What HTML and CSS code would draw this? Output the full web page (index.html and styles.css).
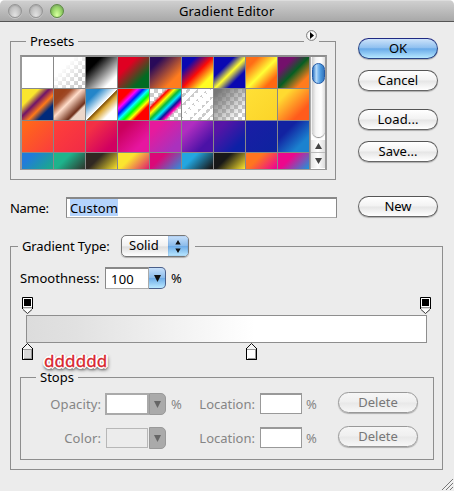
FILE: index.html
```html
<!DOCTYPE html>
<html lang="en">
<head>
<meta charset="utf-8">
<title>Gradient Editor</title>
<link rel="stylesheet" href="styles.css">
</head>
<body>
<div class="window">
  <header class="titlebar">
    <div class="lights"><i class="light"></i><i class="light"></i><i class="light green"></i></div>
    <h1>Gradient Editor</h1>
  </header>
  <div class="upper">
    <div class="left">
      <section class="group presets">
        <span class="legend presets-legend">Presets</span>
        <span class="flyout"><svg width="11" height="11" viewBox="0 0 11 11"><circle cx="5.5" cy="5.5" r="4.9" fill="#fafafa" stroke="#777"/><path d="M4 2v7l4-3.5z" fill="#000"/></svg></span>
        <div class="picker">
          <div class="swatches">
            <i class="g1"></i><i class="g2"></i><i class="g3"></i><i class="g4"></i><i class="g5"></i><i class="g6"></i><i class="g7"></i><i class="g8"></i><i class="g9"></i>
            <i class="g10"></i><i class="g11"></i><i class="g12"></i><i class="g13"></i><i class="g14"></i><i class="g15"></i><i class="g16"></i><i class="g17"></i><i class="g18"></i>
            <i class="g19"></i><i class="g20"></i><i class="g21"></i><i class="g22"></i><i class="g23"></i><i class="g24"></i><i class="g25"></i><i class="g26"></i><i class="g27"></i>
            <i class="g28"></i><i class="g29"></i><i class="g30"></i><i class="g31"></i><i class="g32"></i><i class="g33"></i><i class="g34"></i><i class="g35"></i><i class="g36"></i>
          </div>
          <div class="scroll">
            <div class="track"><div class="thumb"></div></div>
            <div class="arrow up"><svg width="7" height="6" viewBox="0 0 7 6"><path d="M3.5 0L7 6H0z" fill="#444"/></svg></div>
            <div class="arrow"><svg width="7" height="6" viewBox="0 0 7 6"><path d="M3.5 6L7 0H0z" fill="#444"/></svg></div>
          </div>
        </div>
      </section>
      <div class="name-row"><span class="name-label">Name:</span><div class="field name"><span class="selected">Custom</span></div></div>
    </div>
    <div class="buttons">
      <div class="btn primary">OK</div>
      <div class="btn cancel">Cancel</div>
      <div class="btn load">Load...</div>
      <div class="btn save">Save...</div>
      <div class="btn new">New</div>
    </div>
  </div>
  <section class="group editor">
    <div class="type-row"><span class="type-label">Gradient Type:</span>
      <div class="select"><span>Solid</span><b><svg width="6" height="13" viewBox="0 0 6 13"><path d="M3 0l2.7 4.5H.3zM3 13l2.7-4.5H.3z" fill="#111"/></svg></b></div>
    </div>
    <div class="smooth-row"><span class="smooth-label">Smoothness:</span>
      <div class="field num">100</div><div class="drop"><svg width="7" height="7" viewBox="0 0 7 7"><path d="M0 0h7L3.5 7z" fill="#111"/></svg></div><span class="pct">%</span>
    </div>
    <div class="stops-line top">
      <svg width="11" height="17" viewBox="0 0 11 17"><path d="M1 11.5h9L5.5 16z" fill="#fff"/><path d="M1 12.5l4.5 4 4.5-4" fill="none" stroke="#222" stroke-width=".9"/><path d="M.5 .5h10v11.5M.5 .5V12" fill="#fff" stroke="#000"/><path d="M1 1h9v9H1z" fill="#fff"/><path d="M1 10h9v1.3H1z" fill="#999"/><path d="M2 2h7v7H2z" fill="#000"/></svg>
      <svg width="11" height="17" viewBox="0 0 11 17"><path d="M1 11.5h9L5.5 16z" fill="#fff"/><path d="M1 12.5l4.5 4 4.5-4" fill="none" stroke="#222" stroke-width=".9"/><path d="M.5 .5h10v11.5M.5 .5V12" fill="#fff" stroke="#000"/><path d="M1 1h9v9H1z" fill="#fff"/><path d="M1 10h9v1.3H1z" fill="#999"/><path d="M2 2h7v7H2z" fill="#000"/></svg>
    </div>
    <div class="ramp"></div>
    <div class="stops-line bottom">
      <svg width="11" height="17" viewBox="0 0 11 17"><path d="M.5 16.5v-11l5-5 5 5v11z" fill="#f4f4f4" stroke="#111"/><path d="M1 6h9v10H1z" fill="#fff"/><path d="M2 7h7v8H2z" fill="#d7d7d7"/><path d="M1 6.5h9M9.5 7v9M2 15.5h7" stroke="#999"/><path d="M.5 5v11.5h10V5" fill="none" stroke="#000"/></svg>
      <span class="note">dddddd</span>
      <svg class="mid" width="11" height="17" viewBox="0 0 11 17"><path d="M.5 16.5v-11l5-5 5 5v11z" fill="#f4f4f4" stroke="#111"/><path d="M1 6h9v10H1z" fill="#fff"/><path d="M1 6.5h9M9.5 7v9M2 15.5h7" stroke="#999"/><path d="M.5 5v11.5h10V5" fill="none" stroke="#000"/></svg>
    </div>
    <div class="group stops">
      <span class="legend stops-legend">Stops</span>
      <div class="stop-row">
        <span class="lab opacity">Opacity:</span><div class="field num off"></div><div class="drop off"><svg width="7" height="7" viewBox="0 0 7 7"><path d="M0 0h7L3.5 7z" fill="#666"/></svg></div><span class="pct">%</span>
        <span class="lab loc">Location:</span><div class="field pos"></div><span class="pct two">%</span><div class="btn off">Delete</div>
      </div>
      <div class="stop-row">
        <span class="lab color">Color:</span><div class="well"></div><div class="drop off"><svg width="7" height="7" viewBox="0 0 7 7"><path d="M0 0h7L3.5 7z" fill="#666"/></svg></div><span class="pct"></span>
        <span class="lab loc">Location:</span><div class="field pos"></div><span class="pct two">%</span><div class="btn off">Delete</div>
      </div>
    </div>
  </section>
  <svg class="grip" width="12" height="12" viewBox="0 0 12 12"><path d="M0 11L11 0M4 11l7-7M8 11l3-3" stroke="#777" fill="none"/><path d="M1 11.5L11.5 1M5 11.5L11.5 5M9 11.5L11.5 9" stroke="#fff" stroke-width=".6" fill="none"/></svg>
</div>
</body>
</html>
```
FILE: styles.css
```css
* { box-sizing: border-box; }
body { margin: 0; font: 13px/18px "Noto Sans", "Open Sans", sans-serif; color: #000; background: #fff; }
svg { display: block; flex: none; }
.window { position: relative; width: 454px; height: 491px; background: #ececec; border-radius: 5px 5px 0 0; overflow: hidden; }
.titlebar { height: 22px; display: flex; background: linear-gradient(#cfcfcf, #a8a8a8); border-top: 1px solid #ddd; border-bottom: 1px solid #555; }
.lights { display: flex; gap: 7px; padding: 3px 0 0 8px; width: 179px; }
.light { width: 14px; height: 14px; border-radius: 50%; border: 1px solid #949494; background: radial-gradient(ellipse at 50% 90%, #dedede 10%, #b8b8b8 75%); box-shadow: inset 0 1px 1px #8886, 0 1px 0 #ddd8; }
.green { border-color: #5c8a42; background: radial-gradient(ellipse at 50% 85%, #d4ff9c 5%, #8bcb5f 65%, #6aa04b); }
h1 { margin: 0; font-size: 13px; font-weight: 400; line-height: 20px; letter-spacing: .15px; white-space: nowrap; }
.upper { display: flex; height: 224px; padding: 16px 16px 0 10px; justify-content: space-between; }
.group { border: 1px solid #8e8e8e; position: relative; }
.presets { width: 326px; height: 139px; margin-top: 3px; padding: 13px 9px 0; }
.legend { position: absolute; top: -10px; background: #ececec; white-space: nowrap; }
.presets-legend { left: 15px; padding: 0 4px; letter-spacing: -.1px; }
.flyout { position: absolute; left: 293px; top: -12px; width: 15px; height: 14px; padding-left: 2px; background: #ececec; }
.picker { width: 307px; height: 115px; display: flex; border: 2px solid #999; border-top-color: #8e8e8e; border-bottom-width: 1px; background: #888; overflow: hidden; }
.swatches { width: 288px; height: 112px; display: grid; grid-template-columns: repeat(9, 31px); grid-template-rows: 31px 31px 31px 16px; gap: 1px; }
.swatches i { background-size: 100% 31px; }
.g1 { background: #fff; }
.swatches .g2, .swatches .g15, .swatches .g16 { --checks: conic-gradient(#ccc 25%, #fff 0 50%, #ccc 0 75%, #fff 0); background-color: #fff; }
.swatches .g2 { background: linear-gradient(135deg, #fff 30%, #fff0 85%), var(--checks) 0 0/8px 8px; }
.g3 { background-image: linear-gradient(135deg, #000 25%, #fff 80%); }
.g4 { background-image: linear-gradient(135deg, #e00022 30%, #006c22 75%); }
.g5 { background-image: linear-gradient(135deg, #290a59 20%, #ff7c1e 75%); }
.g6 { background-image: linear-gradient(135deg, #0a08b2 22%, #fb0b08 50%, #fffd22 78%); }
.g7 { background-image: linear-gradient(135deg, #0a08b2 32%, #fffd30 52%, #0a08b2 73%); }
.g8 { background-image: linear-gradient(135deg, #ff6d16 20%, #ffff36 52%, #ff6812 80%); }
.g9 { background-image: linear-gradient(135deg, #74106c 25%, #075e22 50%, #ff7b1d 80%); }
.g10 { background-image: linear-gradient(135deg, #f9e62d 27%, #701468 44%, #ff7918 60%, #002a7b 76%); }
.g11 { background-image: linear-gradient(135deg, #9b421b 20%, #a04b28 28%, #ffdcc9 45%, #6e2e19 72%, #ecd7ca 77%); }
.g12 { background-image: linear-gradient(135deg, #2485c9 22%, #fff 50%, #805008 52%, #dcaa38 60%, #fff 78%); }
.g13 { background-image: linear-gradient(135deg, #f00 22%, #f0f 32%, #01f 41%, #0ff 50%, #0f0 59%, #ff0 68%, #f00 76%); }
.swatches .g14 { background: linear-gradient(135deg, #fff0 25%, #f00 31%, #ff0 40%, #08b83b 49%, #00e7ff 57%, #10109a 65%, #f0a 72%, #fff0 78%), conic-gradient(#ccc 25%, #fff 0 50%, #ccc 0 75%, #fff 0) 0 0/8px 8px; }
.swatches .g15 { background: repeating-linear-gradient(135deg, #fff 0 4px, #fff0 4px 7px), var(--checks) 0 0/8px 8px; }
.swatches .g16 { background: linear-gradient(135deg, #777 10%, #7770 85%), var(--checks) 0 0/8px 8px; }
.swatches .g17 { background: linear-gradient(135deg, #ffe036, #fbd429); }
.g18 { background-image: linear-gradient(135deg, #ffda30 20%, #ff5b1c 75%); }
.g19 { background-image: linear-gradient(135deg, #ff671a 10%, #fb413a 90%); }
.g20 { background-image: linear-gradient(135deg, #ff4039, #f12b47); }
.g21 { background-image: linear-gradient(135deg, #f33045 20%, #d10061 80%); }
.g22 { background-image: linear-gradient(135deg, #cb005d 20%, #e616a0 75%); }
.g23 { background-image: linear-gradient(135deg, #e71a9c 20%, #aa31bd 80%); }
.g24 { background-image: linear-gradient(135deg, #b12ec0 22%, #4b12a7 75%); }
.g25 { background-image: linear-gradient(135deg, #5714a6 20%, #0d20a6 78%); }
.g26 { background: linear-gradient(135deg, #1a1da5, #0d239f); }
.g27 { background-image: linear-gradient(135deg, #1222a1 30%, #1b82cf 75%); }
.g28 { background-image: linear-gradient(135deg, #217bdb 18%, #1ab07f 80%); }
.g29 { background-image: linear-gradient(135deg, #1eb38c 28%, #302922 80%); }
.g30 { background-image: linear-gradient(135deg, #302822 28%, #f6df2b 75%); }
.g31 { background-image: linear-gradient(135deg, #fbe52f 28%, #dd1272 78%); }
.g32 { background-image: linear-gradient(135deg, #db0878 25%, #2496df 78%); }
.g33 { background-image: linear-gradient(135deg, #23a6e0 25%, #181818 72%); }
.g34 { background-image: linear-gradient(135deg, #181818 28%, #fbe32c 75%); }
.g35 { background-image: linear-gradient(135deg, #ff7520 28%, #ed0690 72%); }
.g36 { background-image: linear-gradient(135deg, #ed078c 28%, #1b96db 75%); }
.scroll { width: 15px; height: 112px; background: #fff; border-left: 1px solid #aaa; }
.track { height: 80px; margin: 0 0 3px 1px; padding-top: 6px; border-radius: 0 0 7px 7px; background: linear-gradient(90deg, #ccc, #f5f5f5 30%, #fff 70%, #ddd); box-shadow: 0 1px 1px #888; }
.thumb { width: 13px; height: 21px; border-radius: 7px; border: 1px solid #245ba6; background: linear-gradient(90deg, #3478c6, #b8dcfa 30%, #78b5ee 50%, #4a98dd 70%, #3475bb); }
.arrow { height: 15px; display: grid; place-items: center; background: linear-gradient(90deg, #e5e5e5, #fff 50%, #ddd); }
.arrow.up { height: 13px; border-bottom: 1px solid #bbb; }
.name-row { display: flex; height: 21px; margin-top: 17px; }
.name-label { width: 56px; line-height: 22px; letter-spacing: -.3px; }
.field { height: 21px; background: #fff; border: 1px solid #aaa; border-top: 2px solid #888; border-left-color: #888; line-height: 19px; }
.name { width: 271px; padding-left: 3px; border-right-color: #888; }
.selected { display: inline-block; height: 17px; line-height: 19px; background: #b4d3fc; letter-spacing: .15px; vertical-align: top; }
.buttons { width: 80px; }
.btn { width: 80px; height: 21px; border: 1px solid #666; border-top-color: #555; border-radius: 11px; background: linear-gradient(#fff, #f2f2f2 48%, #e5e5e5 52%, #fff); box-shadow: 0 1px 1px #0004; text-align: center; line-height: 19px; }
.primary { border-color: #2a4687; border-top-color: #202a83; background: linear-gradient(#cde3fa, #91c1f0 45%, #69aae8 52%, #b6e8ff); }
.cancel { margin-top: 11px; }
.load { margin-top: 18px; letter-spacing: .1px; }
.save { margin-top: 11px; }
.new { margin-top: 34px; }
.editor { width: 433px; height: 224px; margin-left: 10px; padding-left: 9px; }
.type-row { display: flex; width: 177px; height: 22px; margin: -12px 0 0 -2px; padding-left: 4px; background: #ececec; }
.type-label { width: 99px; line-height: 23px; white-space: nowrap; letter-spacing: -.1px; }
.select { display: flex; width: 68px; height: 22px; border: 1px solid #777; border-radius: 5px; background: linear-gradient(#fff, #f0f0f0 50%, #ddd 54%, #fff); box-shadow: 0 1px 1px #0004; overflow: hidden; }
.select span { width: 46px; padding-left: 7px; line-height: 19px; }
.select b { width: 20px; display: grid; place-items: center; background: linear-gradient(#c7e0fb, #8abbea 50%, #6fade8 52%, #bae8ff); box-shadow: inset 0 0 1px #2850a5; }
.smooth-row { display: flex; margin-top: 10px; height: 22px; }
.smooth-label { width: 85px; line-height: 22px; letter-spacing: .05px; }
.num { width: 44px; height: 22px; padding-left: 5px; line-height: 21px; letter-spacing: .25px; }
.drop { width: 17px; height: 22px; display: grid; place-items: center; border: 1px solid #4a5f8a; border-left: 0; border-radius: 0 5px 5px 0; background: linear-gradient(#c7e0fb, #8abbea 50%, #6fade8 52%, #bae8ff); }
.pct { width: 31px; padding-left: 5px; line-height: 22px; }
.stops-line { display: flex; justify-content: space-between; height: 17px; }
.top { width: 409px; margin: 8px 0 0 2px; }
.ramp { width: 401px; height: 28px; margin: 1px 0 0 6px; border: 1px solid #8e8e8e; background: linear-gradient(90deg, #dcdcdc, #e1e1e1 12%, #fff 57%); }
.bottom { margin-left: 2px; justify-content: flex-start; }
.note { width: 66px; height: 13px; margin: 11px 0 0 11px; font-size: 17px; line-height: 13px; color: #d9252d; -webkit-text-stroke: .3px #d9252d; letter-spacing: .1px; position: relative; z-index: 1; text-shadow: -2px 0 #fff, 2px 0 #fff, 0 -2px #fff, 0 2px #fff, -1px -1px #fff, 1px 1px #fff, 1px -1px #fff, -1px 1px #fff, 0 2px 3px #000, 1px 2px 4px #000; }
.mid { margin-left: 136px; }
.stops { width: 414px; height: 83px; margin-top: 17px; padding-top: 15px; }
.stops-legend { left: 15px; top: -9px; line-height: 16px; padding: 0 4px; }
.stop-row { display: flex; height: 22px; margin-bottom: 12px; color: #858585; }
.lab { line-height: 22px; text-align: right; white-space: nowrap; }
.opacity, .color { width: 84px; padding-right: 4px; letter-spacing: .1px; }
.loc { width: 63px; padding-right: 5px; }
.num.off { border: 2px solid #aaa; }
.drop.off { background: #aaa; border: 1px solid #999; }
.well { width: 42px; height: 20px; margin: 1px 1px 0; border: 1px solid #b7b7b7; }
.pos { width: 42px; border-color: #999; border-top-width: 2px; }
.pct.two { width: 36px; padding-left: 4px; }
.btn.off { margin-top: -1px; border-color: #999; color: #777; background: linear-gradient(#f6f6f6, #efefef 48%, #e8e8e8 52%, #f7f7f7); }
.grip { position: absolute; right: 0; bottom: 0; }
```
